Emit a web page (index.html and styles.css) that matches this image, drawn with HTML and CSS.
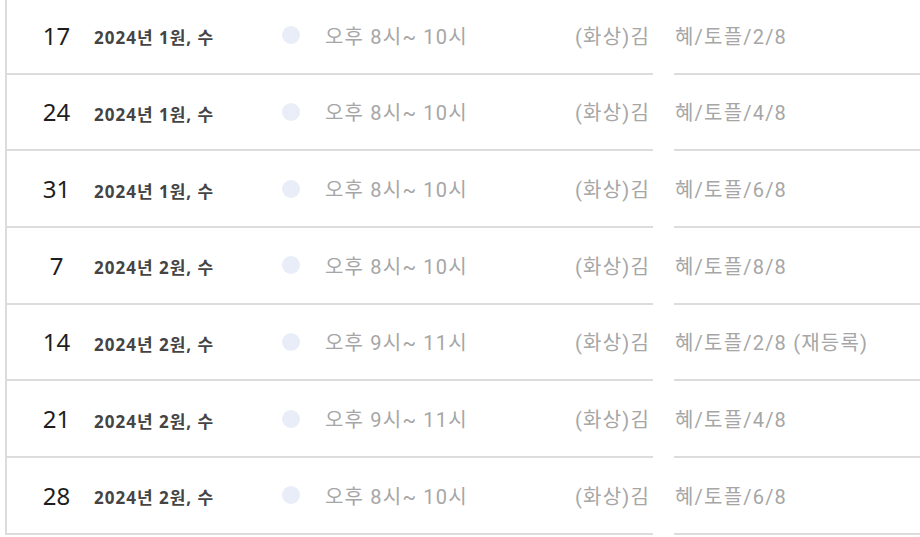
FILE: index.html
```html
<!DOCTYPE html>
<html lang="ko">
<head>
  <meta charset="UTF-8" />
  <meta name="viewport" content="width=device-width, initial-scale=1.0"/>
  <title>수업 일정</title>
  <link rel="stylesheet" href="styles.css">
</head>
<body>

  <div class="schedule">
    <div class="row">
      <div class="cell main">
        <span class="day">17</span>
        <span class="date">2024년 1원, 수</span>
        <span class="dot"></span>
        <span class="time">오후 8시~ 10시</span>
        <span class="name">(화상)김</span>
      </div>
      <div class="cell rest">혜/토플/2/8</div>
    </div>
    <div class="row">
      <div class="cell main">
        <span class="day">24</span>
        <span class="date">2024년 1원, 수</span>
        <span class="dot"></span>
        <span class="time">오후 8시~ 10시</span>
        <span class="name">(화상)김</span>
      </div>
      <div class="cell rest">혜/토플/4/8</div>
    </div>
    <div class="row">
      <div class="cell main">
        <span class="day">31</span>
        <span class="date">2024년 1원, 수</span>
        <span class="dot"></span>
        <span class="time">오후 8시~ 10시</span>
        <span class="name">(화상)김</span>
      </div>
      <div class="cell rest">혜/토플/6/8</div>
    </div>
    <div class="row">
      <div class="cell main">
        <span class="day">7</span>
        <span class="date">2024년 2원, 수</span>
        <span class="dot"></span>
        <span class="time">오후 8시~ 10시</span>
        <span class="name">(화상)김</span>
      </div>
      <div class="cell rest">혜/토플/8/8</div>
    </div>
    <div class="row">
      <div class="cell main">
        <span class="day">14</span>
        <span class="date">2024년 2원, 수</span>
        <span class="dot"></span>
        <span class="time">오후 9시~ 11시</span>
        <span class="name">(화상)김</span>
      </div>
      <div class="cell rest">혜/토플/2/8 (재등록)</div>
    </div>
    <div class="row">
      <div class="cell main">
        <span class="day">21</span>
        <span class="date">2024년 2원, 수</span>
        <span class="dot"></span>
        <span class="time">오후 9시~ 11시</span>
        <span class="name">(화상)김</span>
      </div>
      <div class="cell rest">혜/토플/4/8</div>
    </div>
    <div class="row">
      <div class="cell main">
        <span class="day">28</span>
        <span class="date">2024년 2원, 수</span>
        <span class="dot"></span>
        <span class="time">오후 8시~ 10시</span>
        <span class="name">(화상)김</span>
      </div>
      <div class="cell rest">혜/토플/6/8</div>
    </div>
  </div>

</body>
</html>
```

FILE: styles.css
```css
* {
  box-sizing: border-box;
  margin: 0;
  padding: 0;
}

body {
  font-family: "Noto Sans CJK KR", sans-serif;
  background: #fff;
  overflow: hidden;
}

.schedule {
  margin: -2px 0 0 5px;
  border-left: 2px solid #dcdcdc;
}

.row {
  display: grid;
  grid-template-columns: 646px 1fr;
  column-gap: 21px;
  height: 76.67px;
}

.cell {
  display: flex;
  align-items: center;
  border-bottom: 2px solid #dcdcdc;
  white-space: nowrap;
}

.day {
  width: 43px;
  margin-left: 28px;
  text-align: center;
  font-family: "Noto Sans", sans-serif;
  font-size: 24px;
  color: #1e1e1e;
}

.date {
  width: 188px;
  margin-left: 16px;
  font-family: "Noto Sans", "Noto Sans CJK KR", sans-serif;
  font-size: 17px;
  font-weight: bold;
  color: #444;
  padding-top: 3px;
  letter-spacing: 1px;
}

.dot {
  width: 18px;
  height: 18px;
  border-radius: 50%;
  background: #e8edf8;
}

.time,
.name,
.rest {
  font-family: Roboto, "Noto Sans CJK KR", sans-serif;
  font-size: 20px;
  color: #a6a6a6;
  letter-spacing: 1.2px;
}

.time {
  width: 250px;
  margin-left: 25px;
}

.rest {
  padding-left: 1px;
}
```
